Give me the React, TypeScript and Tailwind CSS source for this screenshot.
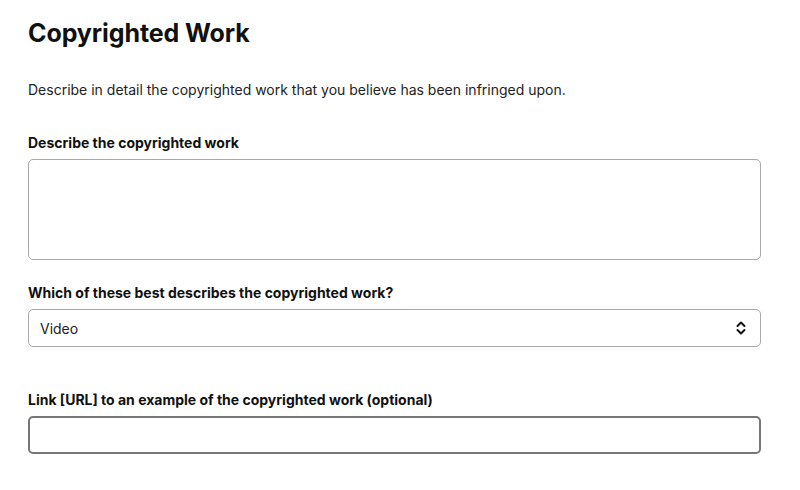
import React from "react";

export default function App() {
  return (
    <div
      className="min-h-[490px] w-[800px] bg-white text-[#111]"
      style={{ fontFamily: "Inter, 'Noto Sans', sans-serif" }}
    >
      <div className="w-[733px] ml-[28px] pt-[17px]">
        <h1 className="text-[25px] leading-[32px] font-bold tracking-[-0.1px] text-[#111]">
          Copyrighted Work
        </h1>
        <p className="mt-[31px] text-[14px] leading-[20px] text-[#222]">
          Describe in detail the copyrighted work that you believe has been infringed upon.
        </p>
        <label className="block mt-[33px] text-[14px] leading-[20px] font-bold text-[#111]">
          Describe the copyrighted work
        </label>
        <div className="mt-[6px] h-[101px] rounded-[5px] border border-[#a9a9a9] bg-white" />
        <label className="block mt-[23px] text-[14px] leading-[20px] font-bold text-[#111]">
          Which of these best describes the copyrighted work?
        </label>
        <div className="mt-[6px] h-[38px] rounded-[5px] border border-[#a9a9a9] bg-white flex items-center justify-between pl-[11px] pr-[13px]">
          <span className="text-[14px] text-[#222]">Video</span>
          <svg width="12" height="16" viewBox="0 0 12 16" fill="none">
            <path d="M2.5 6 L6 2.5 L9.5 6" stroke="#111" strokeWidth="2" strokeLinecap="round" strokeLinejoin="round" />
            <path d="M2.5 10 L6 13.5 L9.5 10" stroke="#111" strokeWidth="2" strokeLinecap="round" strokeLinejoin="round" />
          </svg>
        </div>
        <label className="block mt-[43px] text-[14px] leading-[20px] font-bold text-[#111]">
          Link [URL] to an example of the copyrighted work (optional)
        </label>
        <div className="mt-[6px] h-[38px] rounded-[5px] border-2 border-[#767676] bg-white" />
      </div>
    </div>
  );
}
